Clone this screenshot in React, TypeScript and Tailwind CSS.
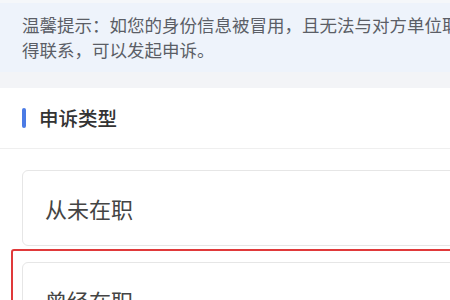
const options = ['从未在职', '曾经在职'];

const OptionCard: React.FC<{ label: string }> = ({ label }) => (
  <div className="w-[460px] h-[76px] flex items-center px-[22px] border border-[#e6e6e6] rounded-md bg-white">
    <span className="text-[22px] text-[#444444] leading-none">{label}</span>
  </div>
);

export default function App() {
  return (
    <div
      className="w-[450px] h-[300px] overflow-hidden bg-white"
      style={{ fontFamily: '"Noto Sans CJK SC", "Noto Sans", sans-serif' }}
    >
      {/* tip banner */}
      <div className="bg-[#eef3fb] px-[22px] pt-[12px] pb-[10px] h-[72px] border-t-[3px] border-[#f5f7fa]">
        <p className="text-[17.5px] leading-[25px] text-[#5b5e66] whitespace-nowrap -mt-[3px]">
          温馨提示：如您的身份信息被冒用，且无法与对方单位取
          <br />
          得联系，可以发起申诉。
        </p>
      </div>
      <div className="h-[16px] bg-[#f3f4f7]" />

      {/* section title */}
      <div className="h-[61px] flex items-center gap-[13px] px-[22px] border-b border-[#efefef]">
        <div className="w-[4px] h-[20px] rounded-full bg-[#4b7be5]" />
        <span className="text-[19.5px] font-medium text-[#333333] leading-none">申诉类型</span>
      </div>

      {/* options */}
      <div className="pt-[21px] pl-[22px]">
        <OptionCard label={options[0]} />
      </div>
      <div className="mt-[3px] ml-[11px] pl-[9px] pt-[11px] border-2 border-[#e0393a] rounded-[3px] w-[460px]">
        <OptionCard label={options[1]} />
      </div>
    </div>
  );
}
